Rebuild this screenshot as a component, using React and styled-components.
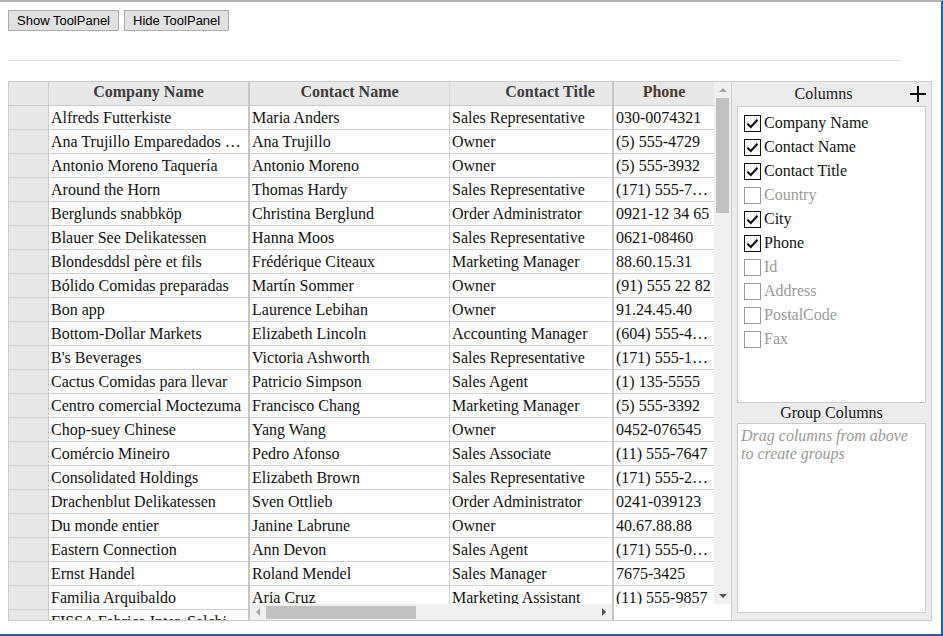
import React from 'react';
import styled, { createGlobalStyle } from 'styled-components';

const GlobalStyle = createGlobalStyle`
  html, body { margin: 0; padding: 0; background: #fff; }
  body { font-family: "Liberation Serif", "Times New Roman", serif; }
  * { box-sizing: border-box; }
`;

const Frame = styled.div`
  width: 943px;
  height: 636px;
  border-top: 2px solid #b4b4b4;
  border-right: 2px solid #2b5aa6;
  border-bottom: 2px solid #2b5aa6;
  padding: 8px 0 0 8px;
  overflow: hidden;
`;

const Toolbar = styled.div`
  display: flex;
  gap: 5px;
`;

const Button = styled.button`
  font-family: "Liberation Sans", Arial, sans-serif;
  font-size: 13px;
  line-height: 15px;
  height: 21px;
  padding: 2px 8px;
  margin: 0;
  border: 1px solid #adadad;
  border-radius: 0;
  background: #e1e1e1;
  color: #000;
`;

const Rule = styled.hr`
  width: 894px;
  height: 0;
  margin: 29px 0 20px 0;
  border: 0;
  border-top: 1px solid #e3e3e3;
`;

const Shell = styled.div`
  display: flex;
  width: 924px;
  height: 540px;
  border: 1px solid #cccccc;
`;

const GridArea = styled.div`
  display: flex;
  width: 722px;
  height: 100%;
  background: #fff;
`;

const Pane = styled.div`
  display: flex;
  flex-direction: column;
  width: ${p => p.$w}px;
  flex-shrink: 0;
  overflow: hidden;
  border-right: ${p => (p.$frozenRight ? '2px solid #c6c6c6' : '0')};
  border-left: ${p => (p.$frozenLeft ? '2px solid #c6c6c6' : '0')};
`;

const HeaderRow = styled.div`
  display: flex;
  height: 24px;
  flex-shrink: 0;
  background: #e8e8e8;
  border-bottom: 1px solid #cccccc;
`;

const HeaderCell = styled.div`
  width: ${p => p.$w}px;
  flex-shrink: 0;
  font-size: 16px;
  font-weight: bold;
  line-height: 20px;
  text-align: center;
  color: ${p => p.$tone || '#3c3c3c'};
  white-space: nowrap;
  overflow: hidden;
  border-right: ${p => (p.$line ? '1px solid #d6d6d6' : '0')};
`;

const Body = styled.div`
  flex: 1;
  min-height: 0;
  overflow: hidden;
`;

const Row = styled.div`
  display: flex;
  height: 24px;
  border-bottom: 1px solid #d2d2d2;
`;

const RowHead = styled.div`
  width: 40px;
  flex-shrink: 0;
  background: #e8e8e8;
  border-right: 1px solid #cccccc;
`;

const Cell = styled.div`
  width: ${p => p.$w}px;
  flex-shrink: 0;
  padding: 0 2px;
  font-size: 16px;
  line-height: 23px;
  color: #111;
  white-space: nowrap;
  overflow: hidden;
  border-right: ${p => (p.$line ? '1px solid #d2d2d2' : '0')};
`;

const HScroll = styled.div`
  display: flex;
  align-items: center;
  height: 16px;
  flex-shrink: 0;
  background: #f0f0f0;
`;

const HThumb = styled.div`
  width: 150px;
  height: 13px;
  background: #c1c1c1;
`;

const Spacer = styled.div`
  flex: 1;
`;

const ArrowBox = styled.div`
  display: flex;
  align-items: center;
  justify-content: center;
  width: ${p => (p.$v ? 17 : 16)}px;
  height: 16px;
  flex-shrink: 0;
`;

const Tri = styled.span`
  width: 0;
  height: 0;
  ${p => {
    const c = p.$dim ? '#a6a6a6' : '#505050';
    if (p.$dir === 'up') return `border-left:4px solid transparent;border-right:4px solid transparent;border-bottom:4px solid ${c};`;
    if (p.$dir === 'down') return `border-left:4px solid transparent;border-right:4px solid transparent;border-top:4px solid ${c};`;
    if (p.$dir === 'left') return `border-top:4px solid transparent;border-bottom:4px solid transparent;border-right:4px solid ${c};`;
    return `border-top:4px solid transparent;border-bottom:4px solid transparent;border-left:4px solid ${c};`;
  }}
`;

const WhiteFill = styled.div`
  height: 16px;
  flex-shrink: 0;
  background: #fff;
`;

const VScrollCol = styled.div`
  display: flex;
  flex-direction: column;
  width: 17px;
  flex-shrink: 0;
`;

const VTrack = styled.div`
  display: flex;
  flex-direction: column;
  align-items: center;
  height: 522px;
  background: #f0f0f0;
`;

const VThumb = styled.div`
  width: 13px;
  height: 115px;
  background: #c1c1c1;
`;

const ToolPanel = styled.div`
  flex: 1;
  display: flex;
  flex-direction: column;
  background: #ececec;
  border-left: 1px solid #cccccc;
  padding: 0 5px 7px 5px;
`;

const PanelTitle = styled.div`
  display: flex;
  align-items: center;
  height: 24px;
  flex-shrink: 0;
`;

const TitleText = styled.div`
  flex: 1;
  text-align: center;
  font-size: 16px;
  color: #1a1a1a;
`;

const ListBox = styled.div`
  height: 297px;
  flex-shrink: 0;
  background: #fff;
  border: 1px solid #cccccc;
  padding: 4px 0 0 6px;
`;

const Item = styled.div`
  display: flex;
  align-items: center;
  gap: 3px;
  height: 24px;
  font-size: 16px;
  color: ${p => (p.$on ? '#111' : '#9a9a9a')};
`;

const Box = styled.span`
  display: flex;
  align-items: center;
  justify-content: center;
  width: 17px;
  height: 17px;
  flex-shrink: 0;
  border: 1px solid ${p => (p.$on ? '#111' : '#9a9a9a')};
  background: #fff;
`;

const GroupLabel = styled.div`
  height: 20px;
  line-height: 20px;
  flex-shrink: 0;
  text-align: center;
  font-size: 16px;
  color: #1a1a1a;
`;

const GroupBox = styled.div`
  flex: 1;
  background: #fff;
  border: 1px solid #cccccc;
  padding: 3px 3px;
  font-size: 16px;
  font-style: italic;
  line-height: 18px;
  color: #9a9a9a;
  white-space: nowrap;
`;

const rows = [
  ['Alfreds Futterkiste', 'Maria Anders', 'Sales Representative', '030-0074321'],
  ['Ana Trujillo Emparedados …', 'Ana Trujillo', 'Owner', '(5) 555-4729'],
  ['Antonio Moreno Taquería', 'Antonio Moreno', 'Owner', '(5) 555-3932'],
  ['Around the Horn', 'Thomas Hardy', 'Sales Representative', '(171) 555-7…'],
  ['Berglunds snabbköp', 'Christina Berglund', 'Order Administrator', '0921-12 34 65'],
  ['Blauer See Delikatessen', 'Hanna Moos', 'Sales Representative', '0621-08460'],
  ['Blondesddsl père et fils', 'Frédérique Citeaux', 'Marketing Manager', '88.60.15.31'],
  ['Bólido Comidas preparadas', 'Martín Sommer', 'Owner', '(91) 555 22 82'],
  ['Bon app', 'Laurence Lebihan', 'Owner', '91.24.45.40'],
  ['Bottom-Dollar Markets', 'Elizabeth Lincoln', 'Accounting Manager', '(604) 555-4…'],
  ["B's Beverages", 'Victoria Ashworth', 'Sales Representative', '(171) 555-1…'],
  ['Cactus Comidas para llevar', 'Patricio Simpson', 'Sales Agent', '(1) 135-5555'],
  ['Centro comercial Moctezuma', 'Francisco Chang', 'Marketing Manager', '(5) 555-3392'],
  ['Chop-suey Chinese', 'Yang Wang', 'Owner', '0452-076545'],
  ['Comércio Mineiro', 'Pedro Afonso', 'Sales Associate', '(11) 555-7647'],
  ['Consolidated Holdings', 'Elizabeth Brown', 'Sales Representative', '(171) 555-2…'],
  ['Drachenblut Delikatessen', 'Sven Ottlieb', 'Order Administrator', '0241-039123'],
  ['Du monde entier', 'Janine Labrune', 'Owner', '40.67.88.88'],
  ['Eastern Connection', 'Ann Devon', 'Sales Agent', '(171) 555-0…'],
  ['Ernst Handel', 'Roland Mendel', 'Sales Manager', '7675-3425'],
  ['Familia Arquibaldo', 'Aria Cruz', 'Marketing Assistant', '(11) 555-9857'],
  ['FISSA Fabrica Inter. Salchi…', 'Diego Roel', 'Accounting Manager', '(91) 555 94 44'],
];

const columns = [
  ['Company Name', true],
  ['Contact Name', true],
  ['Contact Title', true],
  ['Country', false],
  ['City', true],
  ['Phone', true],
  ['Id', false],
  ['Address', false],
  ['PostalCode', false],
  ['Fax', false],
];

const Check = () => (
  <svg width="13" height="13" viewBox="0 0 13 13">
    <path d="M1.5 6.8 L4.8 10 L11.5 2.8" fill="none" stroke="#111" strokeWidth="2.2" />
  </svg>
);

const Plus = () => (
  <svg width="16" height="16" viewBox="0 0 16 16">
    <path d="M8 0 V16 M0 8 H16" stroke="#000" strokeWidth="2" />
  </svg>
);

export default function App() {
  return (
    <>
      <GlobalStyle />
      <Frame>
        <Toolbar>
          <Button>Show ToolPanel</Button>
          <Button>Hide ToolPanel</Button>
        </Toolbar>
        <Rule />
        <Shell>
          <GridArea>
            <Pane $w={241} $frozenRight>
              <HeaderRow>
                <RowHead />
                <HeaderCell $w={199}>Company Name</HeaderCell>
              </HeaderRow>
              <Body>
                {rows.map(r => (
                  <Row key={r[0]}>
                    <RowHead />
                    <Cell $w={199}>{r[0]}</Cell>
                  </Row>
                ))}
              </Body>
            </Pane>
            <Pane $w={362}>
              <HeaderRow>
                <HeaderCell $w={200} $line>Contact Name</HeaderCell>
                <HeaderCell $w={200}>Contact Title</HeaderCell>
              </HeaderRow>
              <Body>
                {rows.map(r => (
                  <Row key={r[0]}>
                    <Cell $w={200} $line>{r[1]}</Cell>
                    <Cell $w={200}>{r[2]}</Cell>
                  </Row>
                ))}
              </Body>
              <HScroll>
                <ArrowBox><Tri $dir="left" $dim /></ArrowBox>
                <HThumb />
                <Spacer />
                <ArrowBox><Tri $dir="right" /></ArrowBox>
              </HScroll>
            </Pane>
            <Pane $w={102} $frozenLeft>
              <HeaderRow>
                <HeaderCell $w={100} $tone="#4d3b2b">Phone</HeaderCell>
              </HeaderRow>
              <Body>
                {rows.map(r => (
                  <Row key={r[0]}>
                    <Cell $w={100}>{r[3]}</Cell>
                  </Row>
                ))}
              </Body>
              <WhiteFill />
            </Pane>
            <VScrollCol>
              <VTrack>
                <ArrowBox $v><Tri $dir="up" $dim /></ArrowBox>
                <VThumb />
                <Spacer />
                <ArrowBox $v><Tri $dir="down" /></ArrowBox>
              </VTrack>
              <WhiteFill />
            </VScrollCol>
          </GridArea>
          <ToolPanel>
            <PanelTitle>
              <TitleText>Columns</TitleText>
              <Plus />
            </PanelTitle>
            <ListBox>
              {columns.map(([name, on]) => (
                <Item key={name} $on={on}>
                  <Box $on={on}>{on && <Check />}</Box>
                  {name}
                </Item>
              ))}
            </ListBox>
            <GroupLabel>Group Columns</GroupLabel>
            <GroupBox>
              Drag columns from above
              <br />
              to create groups
            </GroupBox>
          </ToolPanel>
        </Shell>
      </Frame>
    </>
  );
}
